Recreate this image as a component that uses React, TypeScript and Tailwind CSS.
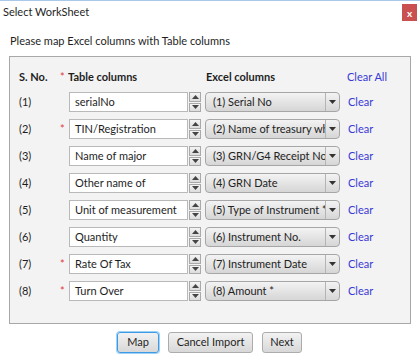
import React from 'react';

const rows = [
  { no: '(1)', req: false, table: 'serialNo', excel: '(1) Serial No' },
  { no: '(2)', req: true, table: 'TIN/Registration', excel: '(2) Name of treasury wh' },
  { no: '(3)', req: false, table: 'Name of major', excel: '(3) GRN/G4 Receipt No.' },
  { no: '(4)', req: false, table: 'Other name of', excel: '(4) GRN Date' },
  { no: '(5)', req: false, table: 'Unit of measurement', excel: '(5) Type of Instrument *' },
  { no: '(6)', req: false, table: 'Quantity', excel: '(6) Instrument No.' },
  { no: '(7)', req: true, table: 'Rate Of Tax', excel: '(7) Instrument Date' },
  { no: '(8)', req: true, table: 'Turn Over', excel: '(8) Amount *' },
];

const Spinner = () => (
  <div className="flex flex-col w-[12px] h-[20px] gap-[1px]">
    {[0, 1].map((i) => (
      <div
        key={i}
        className="flex-1 flex items-center justify-center bg-gradient-to-b from-[#f4f4f4] to-[#dcdcdc] border border-[#a9a9a9]"
      >
        <svg width="7" height="4" viewBox="0 0 7 4">
          {i === 0 ? <polygon points="0,4 7,4 3.5,0" fill="#444" /> : <polygon points="0,0 7,0 3.5,4" fill="#444" />}
        </svg>
      </div>
    ))}
  </div>
);

const Select = ({ label }: { label: string }) => (
  <div className="flex items-center w-[135px] h-[20px] rounded-[4px] border border-[#a6a6a6] bg-gradient-to-b from-[#f3f3f3] to-[#d6d6d6] overflow-hidden">
    <span className="flex-1 pl-[7px] whitespace-nowrap overflow-hidden text-[#222]">{label}</span>
    <div className="w-[14px] h-full flex items-center justify-center border-l border-[#b4b4b4]">
      <svg width="7" height="4" viewBox="0 0 7 4">
        <polygon points="0,0 7,0 3.5,4" fill="#333" />
      </svg>
    </div>
  </div>
);

export default function App() {
  return (
    <div
      className="w-[420px] h-[360px] bg-white border-t border-[#a9c8ea] text-[11px] text-[#1e1e1e] overflow-hidden"
      style={{ fontFamily: '"Segoe UI", Lato, "Liberation Sans", sans-serif' }}
    >
      <div className="flex items-center justify-between h-[23px] pl-[3px] pr-[3px]">
        <span>Select WorkSheet</span>
        <div className="w-[15px] h-[17px] bg-[#c9504f] text-white text-[10px] font-bold flex items-center justify-center leading-none">
          x
        </div>
      </div>
      <div className="pl-[10px] pt-[9px] h-[32px]">Please map Excel columns with Table columns</div>

      <div className="ml-[9px] w-[402px] h-[268px] border border-[#a8a8a8] bg-[#f3f3f3] pt-[10px]">
        <div className="flex items-center h-[20px] pl-[9px] font-bold">
          <span className="w-[41px]">S. No.</span>
          <span className="w-[8px] text-[#e0393e] font-normal">*</span>
          <span className="w-[138px]">Table columns</span>
          <span className="w-[141px]">Excel columns</span>
          <span className="font-normal text-[#3a3ad6]">Clear All</span>
        </div>
        <div className="flex flex-col gap-[7px] mt-[5px]">
          {rows.map((r) => (
            <div key={r.no} className="flex items-center h-[20px] pl-[9px]">
              <span className="w-[41px]">{r.no}</span>
              <span className="w-[9px] text-[#e0393e]">{r.req ? '*' : ''}</span>
              <div className="w-[119px] h-[20px] bg-white border border-[#b9b9b9] flex items-center pl-[5px] whitespace-nowrap overflow-hidden">
                {r.table}
              </div>
              <div className="ml-[1px]">
                <Spinner />
              </div>
              <div className="ml-[4px]">
                <Select label={r.excel} />
              </div>
              <span className="ml-[8px] text-[#3a3ad6]">Clear</span>
            </div>
          ))}
        </div>
      </div>

      <div className="flex justify-center gap-[9px] mt-[8px] pr-[1px]">
        <button className="w-[42px] h-[21px] rounded-[3px] border border-[#3d9ae4] shadow-[0_0_0_1px_#9fd0f5] bg-gradient-to-b from-[#f2f2f2] to-[#d8d8d8]">
          Map
        </button>
        <button className="w-[85px] h-[21px] rounded-[3px] border border-[#acacac] bg-gradient-to-b from-[#f2f2f2] to-[#d8d8d8]">
          Cancel Import
        </button>
        <button className="w-[40px] h-[21px] rounded-[3px] border border-[#acacac] bg-gradient-to-b from-[#f2f2f2] to-[#d8d8d8]">
          Next
        </button>
      </div>
    </div>
  );
}
